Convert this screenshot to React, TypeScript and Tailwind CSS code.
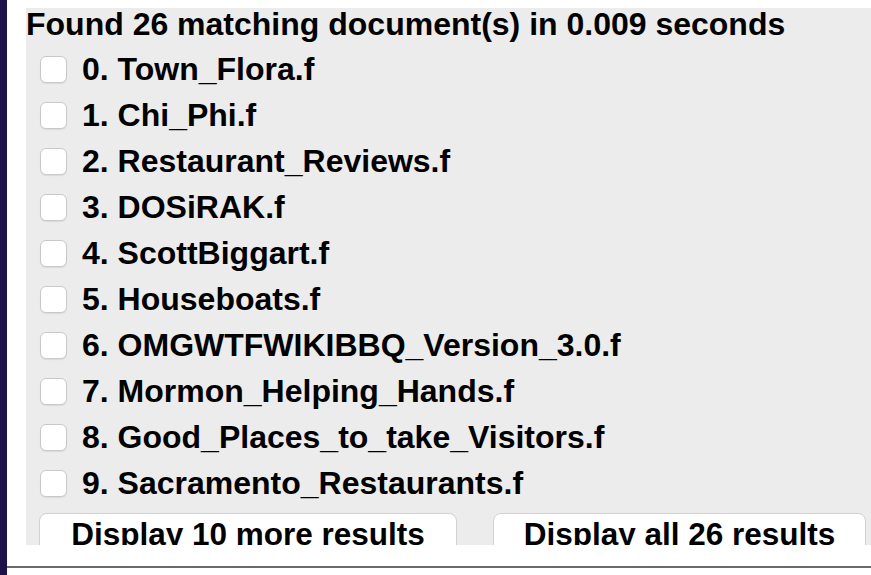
import { useState } from "react";

const docs = [
  "Town_Flora.f",
  "Chi_Phi.f",
  "Restaurant_Reviews.f",
  "DOSiRAK.f",
  "ScottBiggart.f",
  "Houseboats.f",
  "OMGWTFWIKIBBQ_Version_3.0.f",
  "Mormon_Helping_Hands.f",
  "Good_Places_to_take_Visitors.f",
  "Sacramento_Restaurants.f",
];

export default function App() {
  const [checked, setChecked] = useState<boolean[]>(docs.map(() => false));

  function toggle(i: number) {
    setChecked((prev) => prev.map((v, j) => (j === i ? !v : v)));
  }

  return (
    <div
      className="flex h-[575px] w-[871px] overflow-hidden bg-white text-black"
      style={{ fontFamily: '"Liberation Sans", Arial, Helvetica, sans-serif' }}
    >
      {/* dark edge */}
      <div className="w-[7px] shrink-0 bg-[#1e1248]" />

      <div className="flex flex-1 flex-col">
        <div className="h-[8px] shrink-0" />

        {/* results panel */}
        <div className="ml-[19px] h-[537px] shrink-0 overflow-hidden bg-[#ececec]">
          <div className="-mt-[2px] h-[36px] text-[32px] font-bold leading-[36px] whitespace-nowrap">
            Found 26 matching document(s) in 0.009 seconds
          </div>

          <div className="mt-[4px] flex flex-col">
            {docs.map((name, i) => (
              <label
                key={i}
                className="flex h-[46px] cursor-pointer items-center gap-[15px] pl-[14px]"
              >
                <span
                  onClick={() => toggle(i)}
                  className="flex h-[27px] w-[27px] shrink-0 items-center justify-center rounded-[6px] border border-[#c9c9c9] bg-white shadow-[0_1px_1px_rgba(0,0,0,0.08)]"
                >
                  {checked[i] && (
                    <svg width="16" height="16" viewBox="0 0 16 16">
                      <path d="M3 8.5l3 3 7-7" stroke="#000" strokeWidth="2.2" fill="none" />
                    </svg>
                  )}
                </span>
                <span className="text-[32px] font-bold leading-[36px] whitespace-nowrap">
                  {i}. {name}
                </span>
              </label>
            ))}
          </div>

          <div className="mt-[7px] flex gap-[36px] pl-[13px]">
            <button className="h-[40px] w-[418px] rounded-[8px] border border-[#d2d2d2] bg-white pt-[1px] text-[31.5px] font-bold leading-[32px] whitespace-nowrap">
              Display 10 more results
            </button>
            <button className="h-[40px] w-[373px] rounded-[8px] border border-[#d2d2d2] bg-white pt-[1px] text-[31.5px] font-bold leading-[32px] whitespace-nowrap">
              Display all 26 results
            </button>
          </div>
        </div>

        <div className="h-[21px] shrink-0" />
        <div className="h-[2px] shrink-0 bg-[#6b6b6b]" />
        <div className="flex-1" />
      </div>
    </div>
  );
}
